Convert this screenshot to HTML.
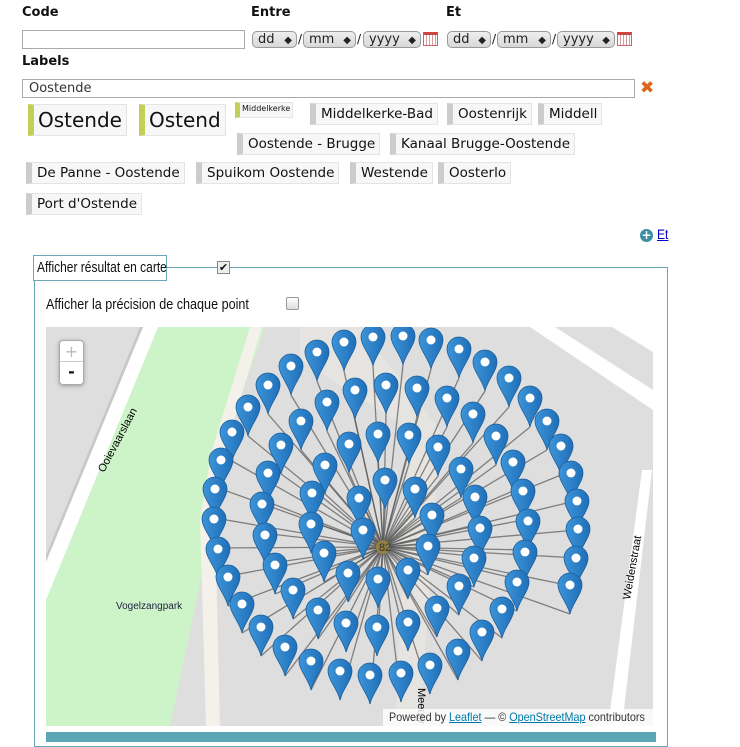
<!DOCTYPE html>
<html><head><meta charset="utf-8">
<style>
*{box-sizing:border-box}
body{margin:0;width:740px;height:738px;overflow:hidden;background:#fff;font-family:"DejaVu Sans","Liberation Sans",sans-serif;font-size:13px;color:#111;position:relative}
.a{position:absolute}
.lbl{font-weight:bold;font-size:13px}
.inp{border:1px solid #aaa;background:#fff;height:19px}
.sel{border:1px solid #999;border-radius:5px;background:linear-gradient(#eee,#d8d8d8);height:17px;font-size:13px;line-height:15px;padding-left:5px;color:#222}
.sel i{position:absolute;right:4px;top:1px;font-style:normal;font-size:10px}
.cal{width:15px;height:14px;background:repeating-linear-gradient(90deg,#fff 0 2px,#d99 2px 3px),#fff;border:1px solid #c66;border-top:3px solid #c44}
.sl{font-size:12px}
.tag{background:#f7f7f7;border:1px solid #e4e4e4;border-left:6px solid #ccc;font-size:13.5px;line-height:20px;padding:0 4px 0 5px;white-space:nowrap}
.g{border-left-color:#c3cf57}
.narrow{font-family:"Liberation Sans",sans-serif;white-space:nowrap;transform-origin:0 0;transform:scaleX(0.86)}
</style></head><body>
<div class="a lbl" style="left:22px;top:5px">Code</div>
<div class="a lbl" style="left:251px;top:5px">Entre</div>
<div class="a lbl" style="left:446px;top:5px">Et</div>
<div class="a inp" style="left:22px;top:30px;width:223px"></div>

<div class="a sel" style="left:252px;top:31px;width:45px">dd<i>◆</i></div><span class="a sl" style="left:298px;top:32px">/</span>
<div class="a sel" style="left:303px;top:31px;width:53px">mm<i>◆</i></div><span class="a sl" style="left:357px;top:32px">/</span>
<div class="a sel" style="left:363px;top:31px;width:58px">yyyy<i>◆</i></div>
<div class="a cal" style="left:423px;top:32px"></div>
<div class="a sel" style="left:447px;top:31px;width:44px">dd<i>◆</i></div><span class="a sl" style="left:492px;top:32px">/</span>
<div class="a sel" style="left:497px;top:31px;width:54px">mm<i>◆</i></div><span class="a sl" style="left:552px;top:32px">/</span>
<div class="a sel" style="left:557px;top:31px;width:58px">yyyy<i>◆</i></div>
<div class="a cal" style="left:617px;top:32px"></div>

<div class="a lbl" style="left:22px;top:54px">Labels</div>
<div class="a inp" style="left:22px;top:79px;width:613px;padding-left:6px;font-size:13px;line-height:17px;color:#333">Oostende</div>
<div class="a" style="left:640px;top:78px;color:#e0641e;font-size:17px;font-weight:bold">✖</div>

<div class="a tag g" style="left:28px;top:104px;font-size:20px;line-height:30px;height:32px;padding-left:4px">Ostende</div>
<div class="a tag g" style="left:139px;top:104px;font-size:20px;line-height:30px;height:32px;padding-left:4px">Ostend</div>
<div class="a tag g" style="left:235px;top:102px;font-size:8px;line-height:12px;height:16px;padding:0 2px;border-left-width:5px">Middelkerke</div>
<div class="a tag" style="left:310px;top:103px">Middelkerke-Bad</div>
<div class="a tag" style="left:447px;top:103px">Oostenrijk</div>
<div class="a tag" style="left:538px;top:103px">Middell</div>
<div class="a tag" style="left:237px;top:133px">Oostende - Brugge</div>
<div class="a tag" style="left:390px;top:133px">Kanaal Brugge-Oostende</div>
<div class="a tag" style="left:26px;top:162px">De Panne - Oostende</div>
<div class="a tag" style="left:196px;top:162px">Spuikom Oostende</div>
<div class="a tag" style="left:350px;top:162px">Westende</div>
<div class="a tag" style="left:438px;top:162px">Oosterlo</div>
<div class="a tag" style="left:26px;top:193px">Port d'Ostende</div>

<div class="a" style="left:640px;top:229px;width:13px;height:13px;border-radius:50%;background:#3a8fa0;color:#fff;font-size:12px;line-height:12px;text-align:center;font-weight:bold">+</div>
<a class="a narrow" style="left:657px;top:226px;color:#00c;font-size:14px;text-decoration:underline">Et</a>

<div class="a" style="left:34px;top:267px;width:634px;height:480px;border:1px solid #6aa8b8"></div>
<div class="a" style="left:33px;top:255px;width:134px;height:26px;border:1px solid #6aa8b8;background:#fff"></div>
<div class="a narrow" style="left:37px;top:259px;font-size:15px;line-height:18px;transform:scaleX(0.8)">Afficher résultat en carte</div>
<div class="a" style="left:217px;top:261px;width:13px;height:13px;border:1px solid #888;background:#eee;font-size:11px;line-height:11px;text-align:center;font-weight:bold">✔</div>
<div class="a narrow" style="left:46px;top:296px;font-size:15px;transform:scaleX(0.84)">Afficher la précision de chaque point</div>
<div class="a" style="left:286px;top:297px;width:13px;height:13px;border:1px solid #999;border-radius:2px;background:linear-gradient(#fff,#ddd)"></div>

<svg class="a" style="left:46px;top:327px" width="607" height="399" viewBox="46 327 607 399">
<defs>
<linearGradient id="mg" x1="0" x2="1"><stop offset="0" stop-color="#3d94d8"/><stop offset="1" stop-color="#1f6fb8"/></linearGradient>
<clipPath id="c"><rect x="46" y="327" width="607" height="399"/></clipPath>
</defs>
<g clip-path="url(#c)">
<rect x="46" y="327" width="607" height="399" fill="#dedede"/>
<polygon points="150,327 265,327 215,470 205,560 170,726 46,726 46,585" fill="#cdf4c9"/>
<polygon points="46,560 143,327 158,327 46,600" fill="#fff"/>
<polygon points="46,555 140,327 143,327 46,562" fill="#c8c8c8"/>
<polygon points="250,327 262,327 225,450 215,520 220,726 206,726 200,520 212,450" fill="#f4f0ea"/>
<polygon points="300,327 360,327 440,430 420,726 395,726 410,430 300,360" fill="#ebe7e1" opacity="0.6"/>
<polygon points="530,327 555,327 653,390 653,410" fill="#fff"/>
<polygon points="612,327 653,327 653,352" fill="#fff"/>
<polygon points="642,470 652,470 622,726 608,726" fill="#fff"/>
<text x="0" y="0" font-family="Liberation Sans,sans-serif" font-size="11" transform="translate(104,473) rotate(-62)">Ooievaarslaan</text>
<text x="0" y="0" font-family="Liberation Sans,sans-serif" font-size="11" transform="translate(630,600) rotate(-80)">Weidenstraat</text>
<text x="116" y="609" font-family="Liberation Sans,sans-serif" font-size="10" fill="#224">Vogelzangpark</text>
<text x="0" y="0" font-family="Liberation Sans,sans-serif" font-size="11" transform="translate(418,688) rotate(90)">Meeuw</text>
<g id="legs"></g>
<circle cx="383" cy="547" r="7" fill="#a08a3c" opacity="0.8"/>
<text x="379" y="551" font-size="11" font-family="Liberation Sans,sans-serif" fill="#333">82</text>
<g id="mk"></g>
</g>
</svg>

<div class="a" style="left:59px;top:340px;width:25px;height:45px;border:1px solid #aaa;border-radius:4px;background:#fff;box-shadow:0 1px 4px rgba(0,0,0,.3)">
<div style="height:21px;border-bottom:1px solid #ccc;text-align:center;color:#bbb;font-size:16px;line-height:21px">+</div>
<div style="text-align:center;font-weight:bold;font-size:16px;line-height:20px">-</div></div>
<div class="a" style="left:383px;top:709px;width:270px;height:17px;background:rgba(255,255,255,.8)"></div>
<div class="a narrow" style="left:389px;top:709px;font-size:12px;line-height:17px;color:#333;transform:scaleX(0.9)">Powered by <span style="color:#0078a8;text-decoration:underline">Leaflet</span> — © <span style="color:#0078a8;text-decoration:underline">OpenStreetMap</span> contributors</div>
<div class="a" style="left:46px;top:732px;width:610px;height:10px;background:#5aa6b4"></div>

<script>
(function(){
var cx=383,cy=547,count=82,res=[];
var L=11,sep=28,lf=5*2*Math.PI,ang=0;
for(var i=count;i>=0;i--){
 if(i<count)res[i]=[Math.round(cx+L*Math.cos(ang)),Math.round(cy+L*Math.sin(ang))];
 ang+=sep/L+i*0.0005; L+=lf/ang;
}
var legs='',mk='';
res.forEach(function(p){legs+='<line x1="'+cx+'" y1="'+cy+'" x2="'+p[0]+'" y2="'+p[1]+'" stroke="#555" stroke-opacity="0.7" stroke-width="1.3"/>';});
var s=res.slice().sort(function(a,b){return a[1]-b[1];});
s.forEach(function(p){
 var x=p[0],y=p[1];
 mk+='<path transform="translate('+x+','+y+')" d="M0,0 C-2,-10 -12,-20 -12,-29 A12,12 0 1 1 12,-29 C12,-20 2,-10 0,0Z" fill="url(#mg)" stroke="#1a5f9c" stroke-width="0.8"/><circle cx="'+x+'" cy="'+(y-29)+'" r="4.5" fill="#fff"/>';
});
document.getElementById('legs').innerHTML=legs;
document.getElementById('mk').innerHTML=mk;
})();
</script>
</body></html>
